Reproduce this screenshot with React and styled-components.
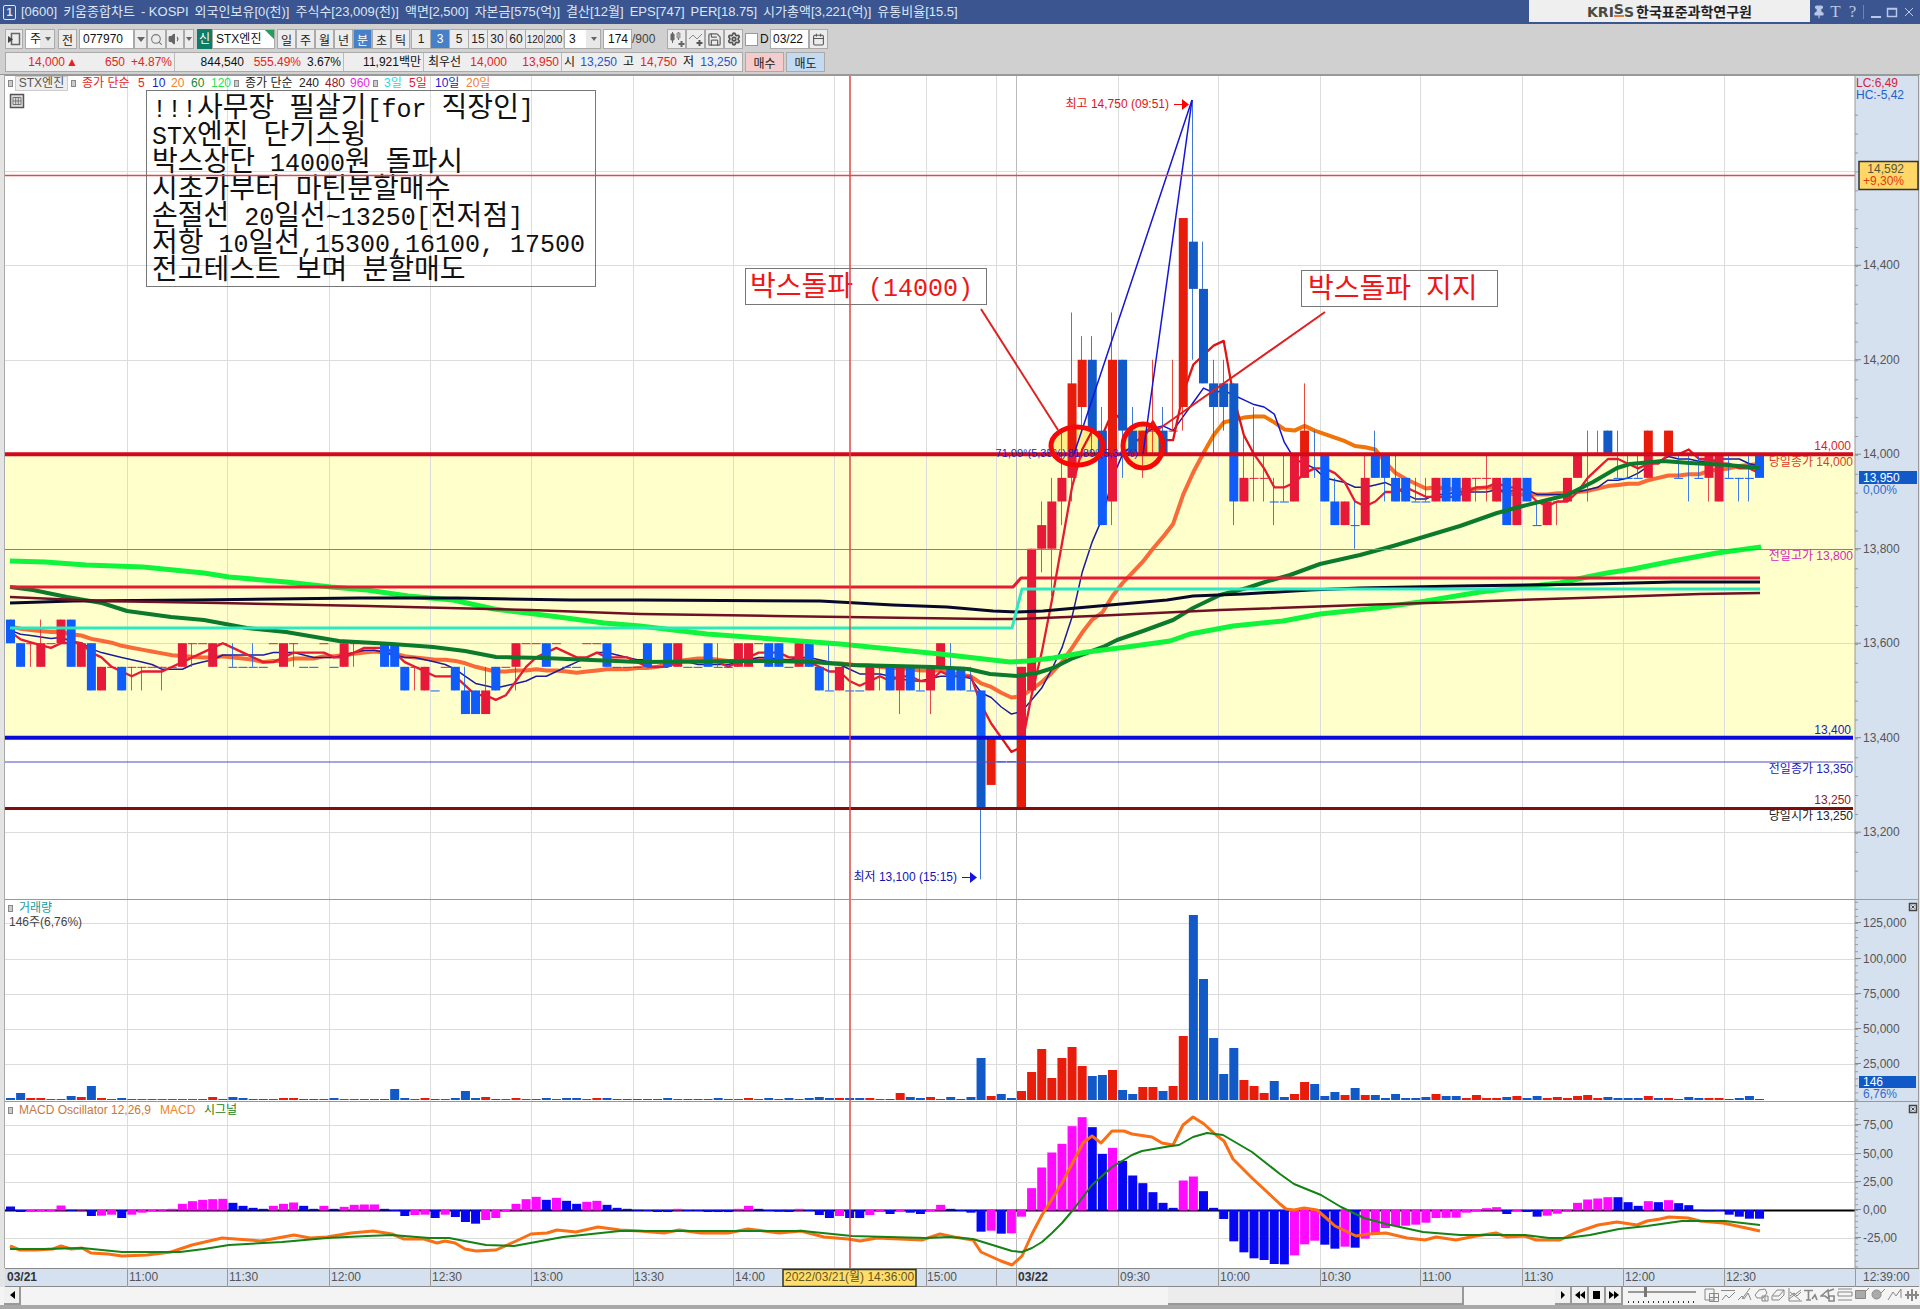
import React from "react";
import styled, { createGlobalStyle } from "styled-components";
import { Search, Save, Settings, Calendar, Pin, Volume1 } from "lucide-react";

const GlobalStyle = createGlobalStyle`
  * { box-sizing: border-box; }
  body {
    margin: 0;
    background: #d0d0d0;
    font-family: "Liberation Sans", "Noto Sans CJK KR", sans-serif;
    font-size: 12px;
    color: #111;
  }
  button, input, select { font: inherit; color: inherit; margin: 0; }
`;

/* ---------- data ---------- */

/* One candle per entry: colour, body top, body bottom, high, low.
   Levels count 50-won steps from 13,600. "r"/"b" with equal top and bottom is a doji. */
const CANDLES = `b1,0 b0,-1 r0,0,0,-1 r0,-1,1 r0,0 r1,0 b1,-1 r0,-1 b0,-2 r-1,-2
r-1,-1 b-1,-2 r-1,-1,-1,-2 r-1,-1,-1,-2 r-1,-1 r-1,-1,-1,-2 r-1,-1 r0,-1 r0,0,0,-1 r0,0
r0,-1 r0,0 b-1,-1,0 b-1,-1 b-1,-1,0 b-1,-1 r0,0 r0,-1 r0,0,0,-1 b-1,-1
b-1,-1 r0,0 b-1,-1 r0,-1 r0,0,0,-1 r0,0 r0,0 b0,-1 b0,-1 b-1,-2
r-1,-1,-1,-2 r-1,-2 b-2,-2 r-1,-1 b-1,-2 b-2,-3,-1 b-2,-3 r-2,-3,-1 b-1,-2 r-1,-1
r0,-1,0,-2 r0,0 r0,0 b0,-1 r0,0 b-1,-1 b-1,-1 r0,0 r0,0 b0,-1
b-1,-1 b-1,-1 b-1,-1 b0,-1 b-1,-1 b0,-1 r0,-1 b-1,-1 b-1,-1 b0,-1
b-1,-1,0 b-1,-1 r0,-1 r0,-1 r0,0 b0,-1 b0,-1 b-1,-1 r0,-1 b0,-1
b-1,-2 b-2,-2,0 r-1,-2 b-2,-2 b-2,-2 r-1,-2 r-1,-1,-1,-2 b-1,-2 r-1,-2,-1,-3 b-1,-2
b-2,-2,-1 r-1,-2,-1,-3 r0,-1 b-1,-2,0 b-1,-2 b-2,-2,-1 b-2,-7,-2,-10 r-4,-6 b-5,-5 b-5,-5
r-1,-7 r4,-2 r5,4,6,3 r6,4,7,2 r7,6,9,5 r11,7,14,6 r12,10,13,9 b12,9,13,8 b9,5,10 r12,6,14,5
b12,9,12,7 b9,8,10 r9,8,9,7 r9,9,12,8 b9,8,10 r9,9,12 r18,10,18,9 b17,15,23,12 b15,11,17 b11,10,12,8
b11,10,12,9 b11,6,11,5 r7,6,9 r7,7,10,6 r7,7,8,6 b6,6,7,5 b6,6,8 r8,6 r9,7,11 b8,8,9,7
b8,6 b6,5,7 r6,5 b5,5,6,4 r7,5,8 b8,7,9 b8,7,8,6 b7,6,8 b7,6 b6,6,7
b6,6,7 r7,6 b7,6 b7,6 r7,6 r7,7,7,6 r7,7,8,6 r7,6 b7,5 r7,5
b7,6 b5,5,6 r6,5 r6,6,6,5 r7,6 r8,7 r8,8,9,6 r8,8,9 b9,8 b7,7,9
b7,7,8 b7,7,8 r9,7 b8,8 r9,8 b7,7,8 b8,8,8,6 b7,7,8 r8,7,8,6 r8,6
b7,7,8 b7,7,7,6 b7,7,8,6 b8,7`
  .trim()
  .split(/\s+/)
  .map((token) => {
    const [top, bottom, high = top, low = bottom] = token.slice(1).split(",").map(Number);
    const up = token[0] === "r";
    return { up, top, bottom, high, low, close: up ? top : bottom };
  });

const VOLUMES = [
  2, 7, 2, 2, 1, 1, 4, 3, 14, 2, 1, 2, 1, 1, 1, 1, 1, 1, 1, 1, 3, 1, 3, 2, 1, 1, 1, 2, 2, 1, 1, 1, 2, 1, 1,
  1, 1, 1, 11, 2, 1, 2, 1, 1, 2, 9, 2, 3, 1, 1, 2, 1, 1, 2, 1, 2, 2, 1, 2, 2, 1, 1, 1, 1, 1, 2, 1, 1, 1, 1,
  2, 1, 1, 2, 1, 2, 1, 2, 1, 2, 3, 2, 2, 2, 2, 2, 1, 1, 7, 3, 2, 3, 1, 3, 1, 3, 42, 4, 6, 2, 9, 28, 51, 22,
  42, 53, 34, 24, 25, 30, 10, 6, 13, 13, 9, 14, 64, 185, 121, 62, 26, 52, 20, 14, 7, 19, 3, 6, 18, 16, 4, 8,
  5, 12, 5, 5, 2, 6, 2, 2, 3, 6, 4, 4, 2, 5, 2, 2, 3, 4, 2, 4, 2, 3, 2, 4, 5, 2, 3, 2, 2, 2, 4, 2, 2, 1, 3,
  2, 2, 2, 1, 2, 4, 1,
];

const OSCILLATOR = [
  12, -6, -5, -3, -2, 15, 2, 3, -18, -17, -14, -24, -14, -8, -2, 2, 5, 20, 28, 32, 34, 35, 23, 14, 8, 5, 14,
  20, 24, 14, 5, 14, 5, 11, 17, 18, 18.1, 5, -2, -18, -15, -14, -24, -14, -21, -36, -41, -30, -24, -6, 20, 34,
  41, 32, 38, 29, 20, 26, 29, 17, 8, 5, 2, -2, -6, -6.1, 5, -1, -2, -6, -6.1, -6.2, 5, 14, 5, -1, -5, -6, 5,
  -3, -15, -24, -18, -24, -24.1, -15, -6, -12, -3, -8, -12, -2, 17, 5, -2, -8, -65, -62, -71, -70, -20, 67,
  129, 174, 200, 253, 280, 250, 170, 188, 149, 105, 82, 55, 23, 8, 90, 102, 58, 8, -27, -94, -127, -145, -150,
  -162, -163, -136, -103, -92, -104, -116, -110, -113, -86, -74, -54, -48, -47, -44, -38, -24, -23.5, -23, -8,
  0, 7, 10, -12, 0, -6, -20, -17, -11, 1, 23, 33, 36, 40, 39.9, 25, 14, 28, 25, 31, 22, 16, 2, 1, 0, -14, -20,
  -26, -26.1,
];

const MA60 =
  "10,587 33,590 67,597 102,603 127,611 171,617 204,620 247,628 286,632 339,641 392,644 433,647 465,651 496,657 543,658 640,662 773,661 813,662 853,665 933,667 968,669 990,674 1017,676 1037,673 1053,668 1073,658 1103,647 1117,640 1143,631 1173,620 1193,608 1220,595 1247,588 1265,582 1290,575 1320,564 1360,555 1393,546 1420,538 1460,526 1497,513 1523,506 1567,495 1593,482 1617,468 1630,464 1663,461 1690,463 1727,465 1760,468";
const MA120 =
  "10,561 45,562 86,565 143,567 204,573 229,577 286,582 331,587 367,590 408,596 453,600 494,609 551,616 604,623 640,626 707,634 773,639 840,644 900,650 940,654 1010,662 1027,661 1053,658 1087,652 1127,647 1170,641 1190,634 1233,626 1283,621 1320,614 1377,608 1420,602 1480,592 1560,583 1587,577 1607,573 1633,569 1673,561 1717,553 1761,547";
const MA240 =
  "10,603 73,601 196,600 359,598 457,598 571,600 640,600 820,601 893,605 947,607 993,611 1017,612 1043,611 1110,605 1167,600 1193,596 1243,594 1310,590 1360,588 1460,586 1593,584 1673,582 1760,582";
const MA480 =
  "10,597 100,601 220,603 367,606 530,610 640,614 773,616 987,619 1017,619 1093,616 1220,610 1360,605 1460,602 1580,598 1700,594 1760,593";
const DAY5 = "10,587 1013,587 1021,578 1760,578";
const DAY3 = "10,628 1012,628 1022,589 1760,589";
const MACD =
  "10,1246 20,1250 35,1250 53,1249 61,1246 71,1249 82,1248 91,1253 108,1254 122,1256 147,1255 171,1252 192,1245 222,1238 261,1241 294,1235 310,1238 327,1237 351,1233 373,1231 392,1234 404,1239 424,1239 437,1243 445,1241 455,1243 465,1249 476,1251 496,1250 514,1242 531,1234 547,1233 557,1230 576,1232 598,1227 620,1230 640,1231 664,1233 679,1230 701,1233 728,1233 748,1229 779,1233 801,1231 824,1237 848,1239 860,1241 877,1238 922,1240 940,1234 954,1237 973,1240 981,1252 1001,1261 1012,1265 1022,1256 1032,1234 1042,1215 1062,1183 1083,1143 1092,1136 1101,1143 1112,1131 1124,1131 1132,1134 1152,1137 1162,1143 1173,1145 1183,1125 1193,1117 1204,1124 1216,1135 1224,1141 1233,1159 1252,1178 1280,1204 1286,1209 1294,1210 1304,1208 1317,1210 1325,1217 1335,1226 1356,1236 1368,1234 1386,1233 1407,1238 1425,1240 1436,1237 1456,1240 1476,1236 1496,1233 1507,1237 1525,1236 1536,1240 1560,1240 1577,1232 1598,1225 1617,1222 1637,1225 1647,1221 1660,1219 1669,1217 1688,1218 1700,1221 1723,1223 1737,1226 1760,1231";
const SIGNAL =
  "10,1249 45,1249 82,1248 122,1252 180,1252 204,1249 229,1245 282,1242 327,1238 367,1236 392,1235 429,1238 449,1238 486,1245 514,1246 563,1237 620,1231 640,1231 742,1231 803,1231 852,1236 926,1238 950,1237 973,1239 1012,1251 1022,1252 1032,1248 1042,1242 1052,1233 1062,1223 1073,1210 1092,1185 1112,1167 1132,1155 1142,1151 1171,1146 1179,1145 1193,1137 1207,1133 1223,1135 1252,1152 1280,1174 1294,1184 1321,1195 1341,1207 1364,1218 1386,1224 1423,1232 1460,1235 1525,1235 1549,1238 1566,1238 1590,1235 1619,1229 1647,1226 1682,1221 1725,1221 1760,1225";

const GRID_X = [127, 227, 329, 430, 531, 633, 733, 834, 926, 996, 1118, 1218, 1320, 1420, 1522, 1623, 1724];
const TIMES = [
  [128, "11:00"], [228, "11:30"], [330, "12:00"], [431, "12:30"], [532, "13:00"], [633, "13:30"],
  [734, "14:00"], [926, "15:00"], [1119, "09:30"], [1219, "10:00"], [1320, "10:30"], [1421, "11:00"],
  [1523, "11:30"], [1624, "12:00"], [1725, "12:30"],
];

const barX = (i) => 10.5 + i * 10.11;
const levelY = (level) => 643.2 - level * 23.62;
const priceY = (price) => levelY((price - 13600) / 50);

/* Bars before the visible range, so that the averages are defined from the first candle on. */
const HISTORY = [...Array(8).fill(0.95), ...Array(11).fill(0.6)];
const CLOSES = [...HISTORY, ...CANDLES.map((c) => c.close)];
const average = (n) =>
  CANDLES.map((_, i) => {
    const end = i + HISTORY.length + 1;
    const mean = CLOSES.slice(end - n, end).reduce((a, b) => a + b, 0) / n;
    return `${barX(i).toFixed(1)},${levelY(mean).toFixed(1)}`;
  }).join(" ");

/* ---------- window ---------- */

const Window = styled.main`
  display: flex;
  flex-direction: column;
  width: 100%;
  border-bottom: 4px solid #a8a8a8;
`;

const TitleBar = styled.header`
  display: flex;
  align-items: center;
  height: 24px;
  padding-left: 3px;
  background: #3a5590;
  color: #dde6f6;
  white-space: nowrap;
`;
const WindowNumber = styled.span`
  width: 13px;
  height: 15px;
  margin-right: 5px;
  border: 1px solid #dde6f6;
  border-radius: 2px;
  font-weight: bold;
  font-size: 11px;
  line-height: 13px;
  text-align: center;
`;
const Title = styled.h1`
  display: flex;
  align-items: baseline;
  gap: 6px;
  margin: 0;
  flex: 1;
  font-size: 13px;
  font-weight: normal;
  line-height: 20px;
`;
const Banner = styled.div`
  display: flex;
  align-items: center;
  align-self: flex-start;
  justify-content: center;
  gap: 2px;
  width: 281px;
  height: 22px;
  background: #efefef;
  color: #222;
  font-size: 14px;
  font-weight: bold;
`;
const BannerMark = styled.span`
  font-family: "DejaVu Sans", sans-serif;
  font-size: 14px;
  color: #4a4a44;
`;
const BannerRaised = styled.span`
  display: inline-block;
  line-height: 12px;
  vertical-align: 3px;
  border-bottom: 2px solid #e87a3c;
`;
const WindowTools = styled.div`
  display: flex;
  align-items: center;
  width: 110px;
`;
const WindowButton = styled.button`
  display: grid;
  place-items: center;
  width: ${(p) => p.$w || 17}px;
  height: 20px;
  padding: 0;
  border: 0;
  background: none;
  color: #b9c8e6;
  font-family: "Liberation Serif", serif;
  font-size: 17px;
`;

/* ---------- toolbar ---------- */

const Toolbar = styled.div`
  display: flex;
  flex-direction: column;
  gap: 3px;
  height: 51px;
  padding: 5px 5px 0;
  background: #d0d0d0;
  border-bottom: 1px solid #999;
`;
const Row = styled.div`
  display: flex;
  height: 20px;
  white-space: nowrap;
`;
const Gap = styled.span`
  width: ${(p) => p.$w}px;
  flex: none;
`;
const ToolButton = styled.button`
  display: grid;
  place-items: center;
  flex: none;
  width: ${(p) => p.$w || 19}px;
  height: 20px;
  padding: 0;
  border: 1px solid #aaa;
  background: ${(p) => p.$bg || (p.$on ? "#4680c8" : "#ececec")};
  color: ${(p) => (p.$on ? "#fff" : "#222")};
`;
const MinuteButton = styled(ToolButton)`
  border-width: 1px 0 1px 1px;
  font-size: ${(p) => (p.$long ? 10 : 12)}px;
`;
const Field = styled.input`
  flex: none;
  width: ${(p) => p.$w}px;
  height: 20px;
  padding: 0 3px;
  border: 1px solid #aaa;
  background: #fff;
  text-align: ${(p) => p.$align || "left"};
`;
const DateField = styled(Field)`
  padding: 0 2px;
`;
const Drop = styled.select`
  flex: none;
  width: ${(p) => p.$w}px;
  height: 20px;
  padding: 0 4px;
  border: 1px solid #aaa;
  border-radius: 0;
  appearance: none;
  background: linear-gradient(#fff, #fff) left / calc(100% - 14px) 100% no-repeat #e8e8e8;
`;
const DropWrap = styled.span`
  position: relative;
  display: flex;
  flex: none;
  &::after {
    content: "";
    position: absolute;
    right: 4px;
    top: 8px;
    border: 3px solid transparent;
    border-top: 4px solid #666;
    pointer-events: none;
  }
`;
const Badge = styled.span`
  width: 15px;
  height: 20px;
  background: #0d7d68;
  color: #fff;
  line-height: 20px;
  text-align: center;
`;
const StockName = styled.span`
  width: 63px;
  height: 20px;
  padding-left: 3px;
  border: 1px solid #aaa;
  background: linear-gradient(225deg, #22a05a 6px, #fff 7px);
  line-height: 18px;
`;
const Plain = styled.span`
  width: ${(p) => p.$w}px;
  line-height: 20px;
  color: #444;
`;
const Check = styled.label`
  display: flex;
  align-items: center;
  width: 25px;
  gap: 2px;
`;
const CheckBox = styled.input`
  appearance: none;
  width: 13px;
  height: 13px;
  border: 1px solid #999;
  background: #fff;
`;

const QuoteStrip = styled.div`
  display: flex;
  flex: none;
  width: 738px;
  height: 20px;
  border: 1px solid #aaa;
  background: #eee;
  line-height: 18px;
`;
const Quote = styled.span`
  width: ${(p) => p.$w}px;
  flex: none;
  padding-right: ${(p) => (p.$end ? 2 : 0)}px;
  border-right: ${(p) => (p.$end ? "1px solid #bbb" : "0")};
  color: ${(p) => p.$c || "#111"};
  text-align: right;
`;

/* ---------- charts ---------- */

const Charts = styled.section`
  position: relative;
  padding-left: 4px;
  background: #e4e4e4;
`;
const Chart = styled.svg`
  display: block;
  width: 100%;
  height: auto;
  font-size: 12px;
`;
const Legend = styled.div`
  position: absolute;
  left: 4px;
  top: 0;
  display: flex;
  align-items: baseline;
  height: 16px;
  line-height: 16px;
  white-space: nowrap;
`;
const LegendItem = styled.span`
  width: ${(p) => p.$w}px;
  color: ${(p) => p.$c};
`;
const LegendName = styled.span`
  width: 53px;
  margin-right: 3px;
  border: 1px solid #ccc;
  background: #eee;
  color: #555;
  line-height: 13px;
  text-align: center;
`;
const Marker = styled.span`
  width: 5px;
  height: 7px;
  margin-right: ${(p) => p.$gap}px;
  border: 1px solid #888;
  background: #ccc;
`;
const Panel = styled.div`
  position: relative;
`;

/* ---------- bottom bar ---------- */

const BottomBar = styled.footer`
  display: flex;
  align-items: stretch;
  height: 18px;
  padding-left: 4px;
  background: #f4f4f4;
`;
const ScrollTrack = styled.div`
  display: flex;
  flex: 1;
`;
const ScrollThumb = styled.div`
  width: 296px;
  margin: 0 91px 0 auto;
  border: 1px solid #999;
  border-width: 0 2px 2px 0;
  background: #ececec;
`;
const PlayButton = styled.button`
  display: grid;
  place-items: center;
  width: 17px;
  padding: 0;
  border: 1px solid #999;
  border-width: 0 2px 2px 0;
  background: #f0f0f0;
`;
const SpeedBox = styled.label`
  display: flex;
  flex-direction: column;
  justify-content: space-between;
  width: 68px;
  margin: 0 7px 0 5px;
  padding-bottom: 2px;
`;
const Speed = styled.input`
  appearance: none;
  width: 100%;
  height: 10px;
  background: linear-gradient(#999, #999) center / 100% 2px no-repeat;
  &::-webkit-slider-thumb {
    appearance: none;
    width: 3px;
    height: 10px;
    background: #777;
  }
`;
const SpeedTicks = styled.span`
  height: 2px;
  background: repeating-linear-gradient(90deg, #333 0 1px, transparent 1px 5px);
`;
const DrawButton = styled.button`
  width: 17px;
  padding: 0;
  border: 0;
  background: none;
`;
const DrawTools = styled.div`
  display: flex;
  width: 217px;
  overflow: hidden;
`;

/* ---------- parts ---------- */

const Select = ({ w, value, label }) => (
  <DropWrap>
    <Drop $w={w} aria-label={label} defaultValue={value}>
      <option>{value}</option>
    </Drop>
  </DropWrap>
);

const RED = "#e5231b";
const BLUE = "#2457c8";

const TITLE_PARTS = [
  "[0600]", "키움종합차트", "- KOSPI", "외국인보유[0(천)]", "주식수[23,009(천)]", "액면[2,500]", "자본금[575(억)]",
  "결산[12월]", "EPS[747]", "PER[18.75]", "시가총액[3,221(억)]", "유통비율[15.5]",
];

function Header() {
  return (
    <TitleBar>
      <WindowNumber>1</WindowNumber>
      <Title>
        {TITLE_PARTS.map((part) => (
          <span key={part}>{part}</span>
        ))}
      </Title>
      <Banner>
        <BannerMark>
          KRI<BannerRaised>S</BannerRaised>S
        </BannerMark>
        한국표준과학연구원
      </Banner>
      <WindowTools>
        <WindowButton aria-label="고정"><Pin size={14} fill="currentColor" /></WindowButton>
        <WindowButton>T</WindowButton>
        <WindowButton>?</WindowButton>
        <WindowButton $w={22} aria-label="최소화">
          <svg width="22" height="16" stroke="currentColor" fill="none">
            <path d="M2.5 1v14" stroke="#6b84b8" />
            <path d="M10 13h10" strokeWidth="2" />
          </svg>
        </WindowButton>
        <WindowButton aria-label="최대화">
          <svg width="12" height="12" stroke="currentColor" fill="none">
            <path d="M1.5 2.5h9v8h-9z M1 3h10" strokeWidth="1.5" />
          </svg>
        </WindowButton>
        <WindowButton aria-label="닫기">
          <svg width="10" height="10" stroke="currentColor"><path d="M1 1l8 8M9 1l-8 8" /></svg>
        </WindowButton>
      </WindowTools>
    </TitleBar>
  );
}

function Tools() {
  const periods = ["일", "주", "월", "년", "분", "초", "틱"];
  const minutes = ["1", "3", "5", "15", "30", "60", "120", "200"];
  return (
    <Toolbar>
      <Row>
        <ToolButton $w={18} aria-label="패널">
          <svg width="14" height="14" fill="none" stroke="#666">
            <path d="M4.5 1.5h8v11h-8z" strokeWidth="1.5" />
            <path d="M1 4l5 3.500-5 3.500z" fill="#444" stroke="none" />
          </svg>
        </ToolButton>
        <Gap $w={2} />
        <Select w={30} value="주" label="종류" />
        <Gap $w={3} />
        <ToolButton>전</ToolButton>
        <Gap $w={2} />
        <Field $w={55} defaultValue="077970" aria-label="종목코드" />
        <ToolButton $w={13} aria-label="종목 목록">
          <svg width="8" height="6"><path d="M0 1h8L4 6z" fill="#666" /></svg>
        </ToolButton>
        <ToolButton aria-label="검색"><Search size={13} color="#777" /></ToolButton>
        <ToolButton $w={18} aria-label="소리"><Volume1 size={14} color="#666" fill="#666" /></ToolButton>
        <ToolButton $w={10} aria-label="소리 설정">
          <svg width="6" height="4"><path d="M0 0h6L3 4z" fill="#666" /></svg>
        </ToolButton>
        <Gap $w={3} />
        <Badge>신</Badge>
        <StockName>STX엔진</StockName>
        <Gap $w={2} />
        {periods.map((p) => (
          <ToolButton key={p} $on={p === "분"}>{p}</ToolButton>
        ))}
        <Gap $w={1} />
        {minutes.map((m) => (
          <MinuteButton key={m} $on={m === "3"} $long={m.length > 2}>{m}</MinuteButton>
        ))}
        <Gap $w={1} />
        <Select w={37} value="3" label="분 단위" />
        <Gap $w={2} />
        <Field $w={29} $align="right" defaultValue="174" aria-label="표시 개수" />
        <Plain $w={35}>/900</Plain>
        <ToolButton aria-label="차트 추가">
          <svg width="16" height="16" stroke="#666" fill="#666">
            <path d="M3.500 1v11M9.500 1v8" /><path d="M2 3h3v6H2z" /><path d="M8 2h3v5H8z" fill="#aaa" stroke="#999" />
            <path d="M12.500 10v6M9.500 13h6" strokeWidth="2" />
          </svg>
        </ToolButton>
        <ToolButton aria-label="지표 추가">
          <svg width="16" height="16" stroke="#888" fill="none">
            <path d="M1 8l4-4 4 4 5-5" /><path d="M11.500 9v6M8.500 12h6" stroke="#555" strokeWidth="2" />
          </svg>
        </ToolButton>
        <ToolButton aria-label="저장"><Save size={15} color="#666" /></ToolButton>
        <ToolButton aria-label="설정"><Settings size={14} color="#555" strokeWidth={3} /></ToolButton>
        <Gap $w={2} />
        <Check><CheckBox type="checkbox" />D</Check>
        <DateField $w={39} defaultValue="03/22" aria-label="날짜" />
        <ToolButton aria-label="달력"><Calendar size={13} color="#555" /></ToolButton>
      </Row>
      <Row>
        <QuoteStrip>
          <Quote $w={59} $c={RED}>14,000</Quote>
          <Quote $w={13} $c={RED}>▲</Quote>
          <Quote $w={47} $c={RED}>650</Quote>
          <Quote $w={50} $end $c={RED}>+4.87%</Quote>
          <Quote $w={69}>844,540</Quote>
          <Quote $w={57} $c={RED}>555.49%</Quote>
          <Quote $w={43} $end>3.67%</Quote>
          <Quote $w={80} $end>11,921백만</Quote>
          <Quote $w={37}>최우선</Quote>
          <Quote $w={46} $c={RED}>14,000</Quote>
          <Quote $w={55} $end $c={RED}>13,950</Quote>
          <Quote $w={13}>시</Quote>
          <Quote $w={42} $c={BLUE}>13,250</Quote>
          <Quote $w={17}>고</Quote>
          <Quote $w={43} $c={RED}>14,750</Quote>
          <Quote $w={17}>저</Quote>
          <Quote $w={43} $c={BLUE}>13,250</Quote>
        </QuoteStrip>
        <Gap $w={2} />
        <ToolButton $w={39} $bg="#f4cccc">매수</ToolButton>
        <Gap $w={2} />
        <ToolButton $w={39} $bg="#c3daf0">매도</ToolButton>
      </Row>
    </Toolbar>
  );
}

function VerticalGrid({ top, bottom }) {
  return (
    <g>
      {GRID_X.map((x) => (
        <path key={x} d={`M${x}.5 ${top}V${bottom}`} stroke="#dcdcdc" />
      ))}
      <path d={`M1016.5 ${top}V${bottom}`} stroke="#bbb" />
    </g>
  );
}

function Axis({ top, bottom, minor, labels }) {
  const ticks = [];
  for (let y = minor.from; y < minor.to; y += minor.step) ticks.push(y);
  return (
    <g>
      <rect x="1855" y={top} width="64" height={bottom - top} fill="#d5e1ef" />
      <path d={`M1855 ${top}V${bottom}M1918.5 ${top}V${bottom}`} stroke="#999" />
      {ticks.map((y) => (
        <path key={y} d={`M1855 ${y}h3`} stroke="#999" />
      ))}
      {labels.map(([y, text]) => (
        <g key={text}>
          <path d={`M1855 ${y}h6`} stroke="#888" />
          <text x="1863" y={y + 4} fill="#555">{text}</text>
        </g>
      ))}
    </g>
  );
}

function CandleSet({ red, blue }) {
  return CANDLES.map((c, i) => {
    const x = barX(i);
    const color = c.up ? red : blue;
    const flat = c.top === c.bottom;
    return (
      <g key={i} fill={color}>
        {c.high !== c.low && (
          <rect
            x={Math.round(x) - 1}
            y={levelY(c.high)}
            width="1"
            height={levelY(c.low) - levelY(c.high)}
            opacity=".8"
          />
        )}
        <rect
          x={x - 4.5}
          y={levelY(c.top)}
          width="9"
          height={flat ? 1 : levelY(c.bottom) - levelY(c.top)}
        />
      </g>
    );
  });
}

const NOTE = [
  "!!!사무장 필살기[for 직장인]",
  "STX엔진 단기스윙",
  "박스상단 14000원 돌파시",
  "시초가부터 마틴분할매수",
  "손절선 20일선~13250[전저점]",
  "저항 10일선,15300,16100, 17500",
  "전고테스트 보며 분할매도",
];
const NoteText = styled.text`
  font-family: "Liberation Mono", "Noto Sans CJK KR", monospace;
  font-size: 25px;
  white-space: pre;
`;
const Hangul = styled.tspan`
  font-size: 28px;
`;
const AngleText = styled.text`
  font-size: 11px;
  fill: #2222c0;
`;

function Note({ x, y, color, children }) {
  return (
    <NoteText x={x} y={y} fill={color}>
      {children.split(/([가-힣]+)/).map((run, i) => (i % 2 ? <Hangul key={i}>{run}</Hangul> : run))}
    </NoteText>
  );
}

function Averages({ orange, red, blue }) {
  return (
    <g fill="none" strokeLinejoin="round">
      <polyline points={average(20)} stroke={orange} strokeWidth="4" />
      <polyline points={average(10)} stroke={blue} strokeWidth="1.5" />
      <polyline points={average(5)} stroke={red} strokeWidth="2.300" />
    </g>
  );
}

function PriceChart() {
  const y14000 = priceY(14000);
  const y13400 = priceY(13400);
  const labels = [14400, 14200, 14000, 13800, 13600, 13400, 13200].map((p) => [
    priceY(p),
    p.toLocaleString("en-US"),
  ]);
  return (
    <Chart viewBox="4 75 1916 825" role="img" aria-label="STX엔진 3분봉">
      <defs>
        <clipPath id="box"><rect x="4" y={y14000} width="1851" height={y13400 - y14000} /></clipPath>
        <clipPath id="outside">
          <rect x="4" y="75" width="1851" height={y14000 - 75} />
          <rect x="4" y={y13400} width="1851" height={900 - y13400} />
        </clipPath>
      </defs>
      <rect x="5" y="75" width="1850" height="825" fill="#fff" />
      <rect x="5" y={y14000} width="1850" height={y13400 - y14000} fill="#ffffcb" />
      <VerticalGrid top={75} bottom={900} />
      {[14600, 14400, 14200, 13600, 13200].map((p) => (
        <path key={p} d={`M5 ${Math.round(priceY(p)) + 0.5}H1855`} stroke="#dcdcdc" />
      ))}
      <ellipse cx="1077" cy="446" rx="26" ry="19" fill="#ffee88" />
      <ellipse cx="1143" cy="446" rx="20" ry="22" fill="#ffee88" />

      <g clipPath="url(#box)"><Averages orange="#fa6a38" red="#e61a35" blue="#1c1c9c" /></g>
      <g clipPath="url(#outside)"><Averages orange="#f07408" red="#e01414" blue="#1414d0" /></g>
      <g clipPath="url(#box)"><CandleSet red="#e61a38" blue="#0f5cfa" /></g>
      <g clipPath="url(#outside)"><CandleSet red="#e81c0a" blue="#1259c8" /></g>

      <g fill="none" strokeLinejoin="round">
        <polyline points={MA60} stroke="#0b7a2c" strokeWidth="4" />
        <polyline points={MA120} stroke="#10f53c" strokeWidth="5" />
        <polyline points={MA240} stroke="#08082c" strokeWidth="3" />
        <polyline points={MA480} stroke="#701024" strokeWidth="2.500" />
        <polyline points={DAY5} stroke="#e61a35" strokeWidth="3" />
        <polyline points={DAY3} stroke="#2be8be" strokeWidth="3" />
      </g>

      <path d={`M5 ${y14000}H1853`} stroke="#d40a1c" strokeWidth="4" />
      <path d="M5 549.500H1853" stroke="#d050c0" />
      <path d={`M5 ${y13400}H1853`} stroke="#0a0ad8" strokeWidth="4" />
      <path d="M5 762H1853" stroke="#4a4ac8" />
      <path d="M5 808.500H1853" stroke="#800c0c" strokeWidth="3" />

      <g textAnchor="end">
        <text x="1851" y="450" fill="#d81e1e">14,000</text>
        <text x="1853" y="466" fill="#e03a2a">당일종가 14,000</text>
        <text x="1853" y="560" fill="#d32ab8">전일고가 13,800</text>
        <text x="1851" y="734" fill="#2020c0">13,400</text>
        <text x="1853" y="773" fill="#2020c0">전일종가 13,350</text>
        <text x="1851" y="804" fill="#901818">13,250</text>
        <text x="1853" y="820" fill="#222">당일시가 13,250</text>
        <text x="1169" y="108" fill="#e01414">최고 14,750 (09:51)</text>
        <text x="957" y="881" fill="#1414b4">최저 13,100 (15:15)</text>
        <AngleText x="1066" y="457">71,09°(5,35%)</AngleText>
        <AngleText x="1138" y="457">81,89°(5,34%)</AngleText>
      </g>
      <path d="M1174 104.500h9" stroke="#f00" />
      <path d="M1182 99l7 5.500-7 5.500z" fill="#f00" />
      <path d="M962 877.500h9" stroke="#1414e0" />
      <path d="M970 872l7 5.500-7 5.500z" fill="#1414e0" />

      <g stroke="#1414dc" strokeWidth="1.500">
        <path d="M1074 454L1192 100" />
        <path d="M1143 454L1192 100" />
      </g>
      <g stroke="#e02020" strokeWidth="2">
        <path d="M981 309L1058 430" />
        <path d="M1325 312L1156 431" />
      </g>
      <g fill="none" stroke="#f50808" strokeWidth="5">
        <ellipse cx="1077" cy="446" rx="26" ry="19" />
        <ellipse cx="1143" cy="446" rx="20" ry="22" />
      </g>

      <g fill="none" stroke="#777">
        <rect x="146.500" y="90.500" width="449" height="196" />
        <rect x="745.500" y="268.500" width="241" height="36" />
        <rect x="1301.500" y="270.500" width="196" height="36" />
      </g>
      {NOTE.map((line, i) => (
        <Note key={line} x={152} y={117 + i * 27} color="#111">{line}</Note>
      ))}
      <Note x={750} y={296} color="#ee1616">박스돌파 (14000)</Note>
      <Note x={1308} y={298} color="#ee1616">박스돌파 지지</Note>

      <g stroke="#555" fill="#ddd">
        <rect x="10.500" y="94.500" width="13" height="13" strokeWidth="1.500" />
        <path d="M13 97.500h8v7h-8zM13 101h8M15.700 97v8M18.300 97v8" strokeWidth=".7" fill="none" />
      </g>

      <path d="M5 175.500H1855M850 75V900" stroke="#dc4a4a" strokeWidth="1.500" />
      <Axis top={75} bottom={900} minor={{ from: 115.2, to: 890, step: 18.9 }} labels={labels} />
      <text x="1856" y="87" fill="#d8203a">LC:6,49</text>
      <text x="1856" y="99" fill="#2460cc">HC:-5,42</text>
      <rect x="1859" y="161.500" width="59" height="28" fill="#ffd766" stroke="#333" strokeWidth="1.500" />
      <text x="1904" y="173" textAnchor="end" fill="#554">14,592</text>
      <text x="1904" y="185" textAnchor="end" fill="#e03a10">+9,30%</text>
      <rect x="1859" y="471" width="58" height="13" fill="#1259c8" />
      <text x="1863" y="482" fill="#fff">13,950</text>
      <text x="1863" y="494" fill="#2f6bd0">0,00%</text>
      <path d="M5 75.500H1919M5 899.500H1919" stroke="#999" />
      <path d="M4.500 75V900" stroke="#aaa" />
    </Chart>
  );
}

function CloseMark({ y }) {
  return (
    <g fill="none" stroke="#444">
      <rect x="1909.500" y={y} width="7" height="7" strokeWidth="1.500" />
      <path d={`M1911.500 ${y + 2}l3 3m0-3l-3 3`} />
    </g>
  );
}

function VolumeChart() {
  const labels = [[922.5, "125,000"], [958.5, "100,000"], [993.5, "75,000"], [1028.5, "50,000"], [1063.5, "25,000"]];
  return (
    <Chart viewBox="4 900 1916 202" role="img" aria-label="거래량">
      <rect x="5" y="900" width="1850" height="202" fill="#fff" />
      <VerticalGrid top={900} bottom={1101} />
      {labels.map(([y]) => (
        <path key={y} d={`M5 ${y + 1}H1855`} stroke="#dcdcdc" />
      ))}
      {VOLUMES.map((v, i) => (
        <rect key={i} x={barX(i) - 4.5} y={1100 - v} width="9" height={v} fill={CANDLES[i].up ? "#e81c0a" : "#1259c8"} />
      ))}
      <path d="M850 900V1102" stroke="#dc4a4a" strokeWidth="1.500" />
      <text x="9" y="926" fill="#444">146주(6,76%)</text>
      <Axis top={900} bottom={1102} minor={{ from: 902.3, to: 1100, step: 7.06 }} labels={labels} />
      <rect x="1859" y="1076" width="57" height="12" fill="#1259c8" />
      <text x="1863" y="1086" fill="#fff">146</text>
      <text x="1863" y="1098" fill="#2f6bd0">6,76%</text>
      <CloseMark y={903.5} />
      <path d="M5 1101.500H1919" stroke="#999" />
      <path d="M4.500 900V1102" stroke="#aaa" />
    </Chart>
  );
}

function MacdChart() {
  const labels = [[1124.5, "75,00"], [1153.5, "50,00"], [1181.5, "25,00"], [1209.5, "0,00"], [1237.5, "-25,00"]];
  return (
    <Chart viewBox="4 1102 1916 166" role="img" aria-label="MACD Oscillator">
      <rect x="5" y="1102" width="1850" height="166" fill="#fff" />
      <VerticalGrid top={1102} bottom={1268} />
      {labels.map(([y]) => (
        <path key={y} d={`M5 ${y + 1}H1855`} stroke="#dcdcdc" />
      ))}
      <path d="M5 1210.500H1855" stroke="#000" strokeWidth="2" />
      {OSCILLATOR.map((raw, i) => {
        const v = raw / 3;
        const rising = i > 0 && raw > OSCILLATOR[i - 1];
        return (
          <rect
            key={i}
            x={barX(i) - 4.5}
            y={v > 0 ? 1210.5 - v : 1210}
            width="9"
            height={Math.max(Math.abs(v), 1)}
            fill={rising ? "#ff0aff" : "#0606f0"}
          />
        );
      })}
      <g fill="none" strokeLinejoin="round">
        <polyline points={MACD} stroke="#fa6e14" strokeWidth="3" />
        <polyline points={SIGNAL} stroke="#148214" strokeWidth="2" />
      </g>
      <path d="M850 1102V1268" stroke="#dc4a4a" strokeWidth="1.500" />
      <Axis top={1102} bottom={1268} minor={{ from: 1108.5, to: 1268, step: 5.66 }} labels={labels} />
      <CloseMark y={1105.5} />
      <path d="M4.500 1102V1268" stroke="#aaa" />
    </Chart>
  );
}

function TimeAxis() {
  return (
    <Chart viewBox="4 1268 1916 19" role="img" aria-label="시간">
      <rect x="5" y="1268" width="1914" height="19" fill="#d5e1ef" />
      <path d="M5 1268.500H1919M5 1286.500H1919" stroke="#888" />
      {[...GRID_X, 1016, 1855].map((x) => (
        <path key={x} d={`M${x}.5 1268V1287`} stroke="#999" />
      ))}
      <g fill="#555">
        {TIMES.map(([x, text]) => (
          <text key={x} x={x + 1} y="1281">{text}</text>
        ))}
        <text x="1863" y="1281">12:39:00</text>
      </g>
      <g fill="#333" fontWeight="bold">
        <text x="7" y="1281">03/21</text>
        <text x="1018" y="1281">03/22</text>
      </g>
      <rect x="783" y="1269.500" width="133" height="17" fill="#ffdf6b" stroke="#333" strokeWidth="1.500" />
      <text x="785" y="1281" fill="#665520">2022/03/21(월) 14:36:00</text>
    </Chart>
  );
}

const DRAWINGS = [
  <path d="M2 2h9v11H2zM6.500 6.500h9v8h-9zM11 6v9M6 10.500h10" />,
  <path d="M1 3.500h14M2 13l4-5 3 3 6-6" />,
  <path d="M1 13l4-4 2 3 4-6 3 7M5 12L13 1" />,
  <path d="M2 8l4-5 6-1 2 4-4 5H4zM9 9h6v5H9zM12 9v5" />,
  <path d="M2 9l5-6h7v5l-5 5H2zM3 9h6l5-6" />,
  <path d="M2 1v13h13M2 12L14 3M3 5l10 8M3 9l4-3 3 3 4-4" />,
  <path d="M1 3.500h9M5.500 3v10M3 13h5M9 12l3-4 2 5" strokeWidth="1.700" />,
  <path d="M1 9l7-6 1 9-4-3zM9 9h5v5H9zM9 4l5-2" strokeWidth="1.600" />,
  <path d="M1 2h14M1 5h14v4H1zM1 13h14" />,
  <path d="M1.500 3.500h10v8h-10zM12 4l3-3" fill="#aaa" />,
  <path d="M6.500 3a4.500 4.500 0 1 0 .1 0zM11 6l4-4" fill="#aaa" />,
  <path d="M1 13L6 5l3 4 5-7v9" />,
  <path d="M1 8h14M4 4v8M8 2v12M12 4v8" strokeWidth="2" />,
];

function Bottom() {
  return (
    <BottomBar>
      <PlayButton aria-label="왼쪽으로"><svg width="6" height="8"><path d="M6 0v8L1 4z" /></svg></PlayButton>
      <ScrollTrack><ScrollThumb /></ScrollTrack>
      <PlayButton aria-label="재생"><svg width="6" height="8"><path d="M1 0v8l4-4z" /></svg></PlayButton>
      <PlayButton aria-label="뒤로"><svg width="10" height="8"><path d="M5 0v8L0 4zM10 0v8L5 4z" /></svg></PlayButton>
      <PlayButton aria-label="정지"><svg width="8" height="8"><path d="M0 0h7v8H0z" /></svg></PlayButton>
      <PlayButton aria-label="앞으로"><svg width="10" height="8"><path d="M0 0v8l5-4zM5 0v8l5-4z" /></svg></PlayButton>
      <SpeedBox>
        <Speed type="range" min="0" max="100" defaultValue="24" aria-label="속도" />
        <SpeedTicks />
      </SpeedBox>
      <DrawTools>
        {DRAWINGS.map((shape, i) => (
          <DrawButton key={i} aria-label={`도구 ${i + 1}`}>
            <svg width="16" height="16" fill="none" stroke="#888">{shape}</svg>
          </DrawButton>
        ))}
      </DrawTools>
    </BottomBar>
  );
}

export default function App() {
  return (
    <Window>
      <GlobalStyle />
      <Header />
      <Tools />
      <Charts>
        <Panel>
          <PriceChart />
          <Legend>
            <Marker $gap={2} />
            <LegendName>STX엔진</LegendName>
            <Marker $gap={6} />
            <LegendItem $w={56} $c="#e5231b">종가 단순</LegendItem>
            <LegendItem $w={14} $c="#e5231b">5</LegendItem>
            <LegendItem $w={19} $c="#1c1cc8">10</LegendItem>
            <LegendItem $w={20} $c="#f08030">20</LegendItem>
            <LegendItem $w={20} $c="#148a30">60</LegendItem>
            <LegendItem $w={23} $c="#28e048">120</LegendItem>
            <Marker $gap={6} />
            <LegendItem $w={54} $c="#222">종가 단순</LegendItem>
            <LegendItem $w={26} $c="#222">240</LegendItem>
            <LegendItem $w={25} $c="#901828">480</LegendItem>
            <LegendItem $w={23} $c="#e828e8">960</LegendItem>
            <Marker $gap={6} />
            <LegendItem $w={25} $c="#28d8e0">3일</LegendItem>
            <LegendItem $w={26} $c="#e01830">5일</LegendItem>
            <LegendItem $w={31} $c="#1c1cc8">10일</LegendItem>
            <LegendItem $w={30} $c="#f08030">20일</LegendItem>
          </Legend>
        </Panel>
        <Panel>
          <VolumeChart />
          <Legend>
            <Marker $gap={6} />
            <LegendItem $c="#169a9a">거래량</LegendItem>
          </Legend>
        </Panel>
        <Panel>
          <MacdChart />
          <Legend>
            <Marker $gap={6} />
            <LegendItem $w={141} $c="#c8783c">MACD Oscillator 12,26,9</LegendItem>
            <LegendItem $w={44} $c="#f58220">MACD</LegendItem>
            <LegendItem $c="#148214">시그널</LegendItem>
          </Legend>
        </Panel>
        <TimeAxis />
      </Charts>
      <Bottom />
    </Window>
  );
}
